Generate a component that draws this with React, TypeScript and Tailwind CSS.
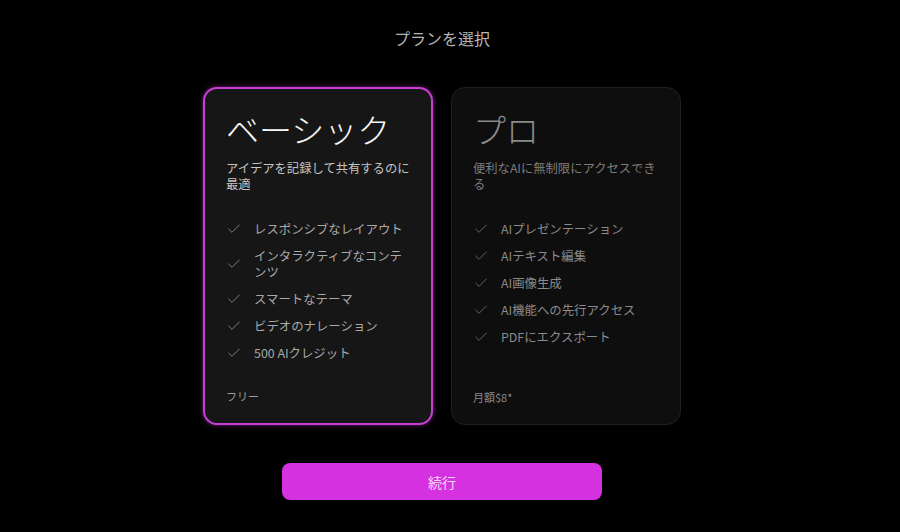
import { Check } from "lucide-react";

const FONT = "font-['Noto_Sans_CJK_JP','Noto_Sans',sans-serif]";

type Plan = {
  name: string;
  desc: string;
  features: string[];
  price: string;
  selected: boolean;
};

const PLANS: Plan[] = [
  {
    name: "ベーシック",
    desc: "アイデアを記録して共有するのに最適",
    features: [
      "レスポンシブなレイアウト",
      "インタラクティブなコンテンツ",
      "スマートなテーマ",
      "ビデオのナレーション",
      "500 AIクレジット",
    ],
    price: "フリー",
    selected: true,
  },
  {
    name: "プロ",
    desc: "便利なAIに無制限にアクセスできる",
    features: [
      "AIプレゼンテーション",
      "AIテキスト編集",
      "AI画像生成",
      "AI機能への先行アクセス",
      "PDFにエクスポート",
    ],
    price: "月額$8*",
    selected: false,
  },
];

function PlanCard({ plan }: { plan: Plan }) {
  const on = plan.selected;
  return (
    <div
      className={`w-[230px] h-[338px] rounded-[14px] flex flex-col px-[21px] pt-[21px] pb-[19px] ${
        on
          ? "bg-[#161616] border-2 border-[#c63fd0] shadow-[0_0_5px_rgba(200,60,210,0.55)]"
          : "bg-[#0e0e0e] border border-[#1f1f1f] pt-[22px] px-[21px]"
      }`}
    >
      <h2
        className={`text-[33px] leading-[38px] font-light ${
          on ? "text-[#f6f6f6]" : "text-[#8a8a8a]"
        }`}
      >
        {plan.name}
      </h2>
      <p
        className={`mt-[12px] text-[12.3px] leading-4 ${
          on ? "text-[#c4c4c4]" : "text-[#7c7c7c]"
        }`}
      >
        {plan.desc}
      </p>
      <ul className="mt-[29px] flex flex-col gap-[11px]">
        {plan.features.map((f) => (
          <li key={f} className="flex items-center gap-[12px]">
            <Check
              size={16}
              strokeWidth={1.3}
              className={`shrink-0 ${on ? "text-[#8c8c8c]" : "text-[#6e6e6e]"}`}
            />
            <span
              className={`text-[12.4px] leading-4 ${
                on ? "text-[#a9a9a9]" : "text-[#8a8a8a]"
              }`}
            >
              {f}
            </span>
          </li>
        ))}
      </ul>
      <div
        className={`mt-auto text-[11px] leading-4 ${
          on ? "text-[#9a9a9a]" : "text-[#8a8a8a]"
        }`}
      >
        {plan.price}
      </div>
    </div>
  );
}

export default function App() {
  return (
    <div
      className={`w-full h-[532px] bg-black pr-4 flex flex-col items-center ${FONT}`}
    >
      <h1 className="mt-[26px] text-base leading-6 text-[#b5b5b5]">
        プランを選択
      </h1>
      <div className="mt-[37px] flex gap-[18px]">
        {PLANS.map((p) => (
          <PlanCard key={p.name} plan={p} />
        ))}
      </div>
      <button className="mt-[38px] w-[320px] h-[37px] rounded-[8px] bg-[#d631e0] text-sm text-[#f6dbf8]">
        続行
      </button>
    </div>
  );
}
